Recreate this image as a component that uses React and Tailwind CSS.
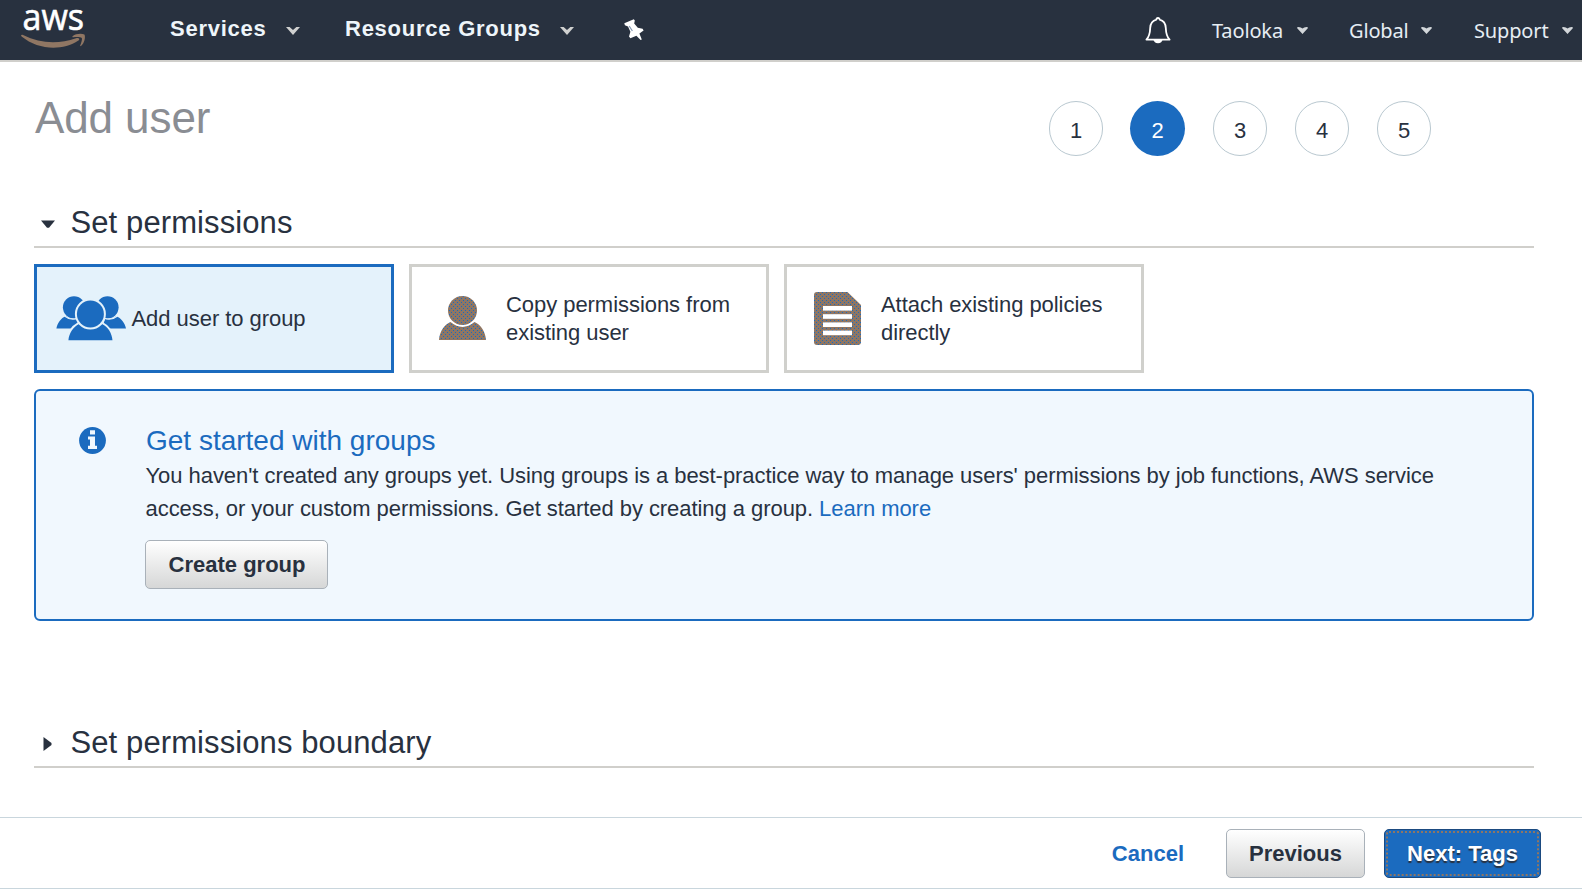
import React from "react";

const DotFill = ({ id }) => (
  <defs>
    <pattern id={id} width="4" height="4" patternUnits="userSpaceOnUse">
      <rect width="4" height="4" fill="#8f7663" />
      <rect x="0" y="0" width="1" height="1" fill="#1b6bbf" />
      <rect x="2" y="2" width="1" height="1" fill="#1b6bbf" />
    </pattern>
  </defs>
);

const AwsLogo = () => (
  <svg className="block overflow-visible" width="66" height="50" viewBox="0 0 66 50">
    <text x="1.5" y="29.6" fill="#ffffff" stroke="#ffffff" strokeWidth="0.6" textLength="61.5" lengthAdjust="spacingAndGlyphs" className="font-['Open_Sans',sans-serif] text-[36px] font-medium">aws</text>
    <g transform="translate(0 8)" fill="#8f7663">
      <path d="M0 27.4 C0.4 26.6 1.2 26.6 2 27.1 C20 36 38 36.2 55 30.2 C57.6 29.2 59.4 31 57.4 32.6 C41 43.4 17 42 0.6 28.6 Z" />
      <path d="M51.6 28.2 C54.6 25.4 60.6 25.2 63.4 26.4 C64.8 29 63.4 35 60 38 C59.4 38.4 59 38 59.2 37.4 C60.4 34.6 61.4 31.2 60.8 30 C59.6 28.8 55.4 28.8 52.4 29.2 C51.4 29.2 51 28.8 51.6 28.2 Z" />
    </g>
  </svg>
);

const Chevron = () => (
  <svg className="block" width="14" height="8" viewBox="0 0 14 8">
    <path d="M0 0 H3.6 L7 3 L10.4 0 H14 L7 8 Z" fill="#d0d1d0" />
  </svg>
);

const Caret = () => (
  <svg className="block" width="11" height="7" viewBox="0 0 11 7">
    <path d="M0 1 Q0 0 1.5 0 Q4 0.4 5.5 1.6 Q7 0.4 9.5 0 Q11 0 11 1 L5.5 7 Z" fill="#d3d7da" />
  </svg>
);

const Pin = () => (
  <svg className="block" width="20" height="22" viewBox="0 0 20 22">
    <path d="M0.3 4.2 L9.8 0.2 L10.8 1.6 L10.2 4.4 L13.8 8.8 L18.6 9.8 L19.6 11.6 L15.4 14.6 L17.8 20.4 L16.6 21 L12.4 16.8 L6.4 19.2 L5 17.6 L6.4 12.8 L4 7.4 L0.9 6.2 Z" fill="#ffffff" />
    <path d="M5.2 7 L8.4 12" stroke="#8296b0" strokeWidth="1.2" />
  </svg>
);

const Bell = () => (
  <svg className="block" width="26" height="27" viewBox="0 0 26 27">
    <path d="M11.4 2.6 a1.6 1.6 0 0 1 3.2 0 C18.6 3.6 20.6 6.6 20.8 11 C21 16.6 21.6 19.6 24.6 22.6 H1.4 C4.4 19.6 5 16.6 5.2 11 C5.4 6.6 7.4 3.6 11.4 2.6 Z" fill="none" stroke="#ffffff" strokeWidth="1.8" strokeLinejoin="round" />
    <path d="M8.4 22.6 H17.6 Q17 26.2 13 26.2 Q9 26.2 8.4 22.6 Z" fill="#ffffff" />
  </svg>
);

const GroupIcon = () => (
  <svg className="block shrink-0" width="70" height="46" viewBox="0 0 70 46" fill="#1b6bbf">
    <circle cx="18" cy="11.3" r="11.1" />
    <circle cx="51.5" cy="11.3" r="11.1" />
    <path d="M0.4 32.5 C1.4 27 5 22 9.8 20 Q14 24 21 23 L24 32.5 Z" />
    <path d="M70 32.5 C69 27 65 22 60.2 20 Q56 24 49 23 L46 32.5 Z" />
    <path d="M8.5 20 Q14 24.5 21 22.5 M61.5 20 Q56 24.5 49 22.5" fill="none" stroke="#e4f2fb" strokeWidth="1.2" />
    <g stroke="#e4f2fb" strokeWidth="4" paintOrder="stroke">
      <path d="M12.4 44.5 C13 37 17.4 31 23 28 Q34 34.5 46 28 C52 31 56 37 56.5 44.5 Z" />
      <circle cx="34.4" cy="18" r="13.5" />
    </g>
    <rect x="8" y="44.5" width="52" height="2" fill="#e4f2fb" />
  </svg>
);

const UserIcon = () => (
  <svg className="block" width="47" height="44" viewBox="0 0 47 44">
    <DotFill id="userFill" />
    <circle cx="23.5" cy="14.5" r="14.5" fill="url(#userFill)" />
    <path d="M0 44 C0.5 36 5 28.5 11.5 26 Q23.5 35.8 35.5 26 C42 28.5 46.5 36 47 44 Z" fill="url(#userFill)" />
  </svg>
);

const DocIcon = () => (
  <svg className="block" width="47" height="53" viewBox="0 0 47 53">
    <DotFill id="docFill" />
    <path d="M3 0 H33.5 L47 13 V50 Q47 53 44 53 H3 Q0 53 0 50 V3 Q0 0 3 0 Z" fill="url(#docFill)" />
    <g fill="#ffffff">
      <rect x="9" y="14" width="29" height="4.6" />
      <rect x="9" y="22.2" width="29" height="4.6" />
      <rect x="9" y="30.4" width="29" height="4.6" />
      <rect x="9" y="38.6" width="29" height="4.6" />
    </g>
  </svg>
);

const InfoIcon = () => (
  <svg className="block" width="27" height="27" viewBox="0 0 27 27">
    <circle cx="13.5" cy="13.5" r="13.4" fill="#1b6bbf" />
    <path d="M11 3.2 H16 V7.4 H11 Z M9 9.4 H16 V18.8 H18 V22 H9 V18.8 H11 V12.6 H9 Z" fill="#f1f8fe" />
  </svg>
);

const NavMenu = ({ label, className }) => (
  <div className={`flex items-center ${className}`}>
    <span>{label}</span>
    <Caret />
  </div>
);

const Step = ({ n, active }) => (
  <div className={`flex items-center justify-center rounded-full pt-[4px] text-[22px] leading-none ${active ? "size-[55px] bg-[#1b6bbf] text-white" : "ml-px h-[55px] w-[54px] border border-[#b9c8d0] text-[#28313f]"}`}>
    {n}
  </div>
);

const SectionTitle = ({ open, children }) => (
  <div className="flex h-[52px] items-center border-b-2 border-[#d0cfcb] pl-[7px] text-[31px] leading-none tracking-[0.1px] text-[#28313f]">
    <svg className="mt-[5px] block" width="14" height="14" viewBox="0 0 14 14">
      {open ? <path d="M0 3.5 H14 L8 10.8 H6 Z" fill="#28313f" /> : <path d="M2.5 0 L10.5 6 V8 L2.5 14 Z" fill="#28313f" />}
    </svg>
    <span className="ml-[15.5px] mt-[2px]">{children}</span>
  </div>
);

const button = "flex h-[49px] items-center justify-center rounded-[5px] border text-[22px] font-bold leading-none";
const grayButton = "border-[#a9b1b9] bg-gradient-to-b from-white to-[#d6d7d7] text-[#28313f]";

export default function App() {
  return (
    <div className="flex h-[889px] w-[1582px] flex-col overflow-hidden bg-white font-['Liberation_Sans',Arial,sans-serif]">
      <header className="flex h-[62px] shrink-0 items-start border-b-2 border-[#d0cfcb] bg-[#28313f]">
        <div className="ml-[21px] w-[66px]"><AwsLogo /></div>
        <nav className="ml-[83px] flex h-[57px] items-center text-[22px] font-bold tracking-[0.75px] text-[#eef5fa]">
          <span className="w-[116px]">Services</span>
          <div className="mt-[5px]"><Chevron /></div>
          <span className="ml-[45px] w-[215px]">Resource Groups</span>
          <div className="mt-[5px]"><Chevron /></div>
          <div className="ml-[50px] mt-[2px]"><Pin /></div>
        </nav>
        <div className="ml-auto flex h-[61px] items-center font-['Noto_Sans',sans-serif] text-[20px] tracking-[-0.15px] text-[#e6edf3]">
          <Bell />
          <NavMenu label="Taoloka" className="ml-[41px] w-[96px] justify-between" />
          <NavMenu label="Global" className="ml-[41px] w-[83px] justify-between" />
          <NavMenu label="Support" className="ml-[42px] mr-[9px] w-[99px] justify-between" />
        </div>
      </header>

      <main className="flex flex-1 flex-col pl-[34px] pr-12">
        <div className="flex h-[134px] items-start justify-between">
          <h1 className="mt-[31px] pl-[1px] text-[44px] leading-[50px] tracking-[-0.1px] text-[#8a8d93]">Add user</h1>
          <div className="mr-[103px] mt-[39px] flex gap-[27px]">
            <Step n="1" />
            <Step n="2" active />
            <Step n="3" />
            <Step n="4" />
            <Step n="5" />
          </div>
        </div>

        <SectionTitle open>Set permissions</SectionTitle>

        <div className="mt-4 flex gap-[15px] text-[22px] leading-7 tracking-[-0.05px] text-[#28313f]">
          <div className="flex h-[109px] w-[360px] items-center border-[3px] border-[#1b6bbf] bg-[#e4f2fb] pl-[19px]">
            <GroupIcon />
            <span className="ml-[5.5px]">Add user to group</span>
          </div>
          <div className="flex h-[109px] w-[360px] items-center border-[3px] border-[#d0d0cc] pl-[27px]">
            <div className="-mt-px"><UserIcon /></div>
            <span className="ml-5 w-[240px]">Copy permissions from existing user</span>
          </div>
          <div className="flex h-[109px] w-[360px] items-center border-[3px] border-[#d0d0cc] pl-[27px]">
            <DocIcon />
            <span className="ml-5 w-[240px]">Attach existing policies directly</span>
          </div>
        </div>

        <section className="mt-4 flex h-[232px] rounded-[6px] border-2 border-[#1b6bbf] bg-[#f1f8fe]">
          <div className="ml-[43px] mt-9"><InfoIcon /></div>
          <div className="ml-[39px] mt-[34px] text-[#28313f]">
            <h2 className="pl-[1px] text-[28px] leading-8 text-[#1b6bbf]">Get started with groups</h2>
            <p className="mt-[2px] whitespace-nowrap pl-[0.5px] text-[22px] leading-[33px] tracking-[-0.055px]">
              You haven't created any groups yet. Using groups is a best-practice way to manage users' permissions by job functions, AWS service
              <br />
              access, or your custom permissions. Get started by creating a group. <a className="text-[#1b6bbf]">Learn more</a>
            </p>
            <button className={`${button} ${grayButton} mt-[15px] w-[183px] pl-[1px]`}>Create group</button>
          </div>
        </section>

        <div className="mt-[95px]">
          <SectionTitle>Set permissions boundary</SectionTitle>
        </div>
      </main>

      <footer className="flex h-[72px] shrink-0 items-center justify-end border-y border-[#c9d6dd] pr-[41px]">
        <a className="mr-[42px] pt-[2px] text-[22px] font-bold leading-none text-[#1b6bbf]">Cancel</a>
        <button className={`${button} ${grayButton} w-[139px] pt-[2px]`}>Previous</button>
        <button className={`${button} ml-[19px] w-[157px] border-[#1b4a80] bg-[#1b6bbf] pt-[2px] text-white outline-2 -outline-offset-4 outline-dotted outline-[#8f7663] [text-shadow:0_2px_1px_#28313f]`}>Next: Tags</button>
      </footer>
    </div>
  );
}
